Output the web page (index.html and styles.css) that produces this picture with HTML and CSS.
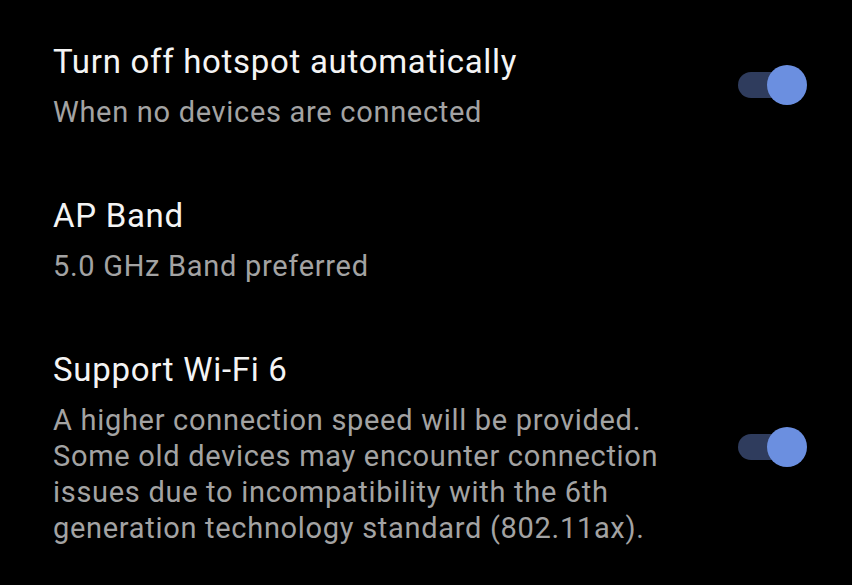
FILE: index.html
```html
<!DOCTYPE html>
<html lang="en">
<head>
    <meta charset="UTF-8">
    <meta name="viewport" content="width=device-width, initial-scale=1.0">
    <title>Hotspot settings</title>
    <link rel="stylesheet" href="styles.css">
</head>
<body>
    <div class="settings">
        <div class="row">
            <div class="text">
                <div class="title">Turn off hotspot automatically</div>
                <div class="summary">When no devices are connected</div>
            </div>
            <div class="switch on">
                <span class="track"></span>
                <span class="thumb"></span>
            </div>
        </div>

        <div class="row">
            <div class="text">
                <div class="title">AP Band</div>
                <div class="summary">5.0 GHz Band preferred</div>
            </div>
        </div>

        <div class="row">
            <div class="text narrow">
                <div class="title">Support Wi-Fi 6</div>
                <div class="summary">A higher connection speed will be provided.<br>Some old devices may encounter connection issues due to incompatibility with the 6th generation technology standard (802.11ax).</div>
            </div>
            <div class="switch on">
                <span class="track"></span>
                <span class="thumb"></span>
            </div>
        </div>
    </div>
</body>
</html>
```

FILE: styles.css
```css
body {
    margin: 0;
    background-color: #000;
    font-family: Roboto, "Liberation Sans", sans-serif;
}
.settings {
    padding-top: 8px;
}
.row {
    display: flex;
    align-items: center;
    justify-content: space-between;
    padding: 32px 45px 32px 53px;
}
.text.narrow {
    max-width: 615px;
}
.title {
    color: #f4f4f4;
    font-size: 33px;
    line-height: 44px;
    letter-spacing: 0.7px;
    margin-bottom: 10px;
}
.summary {
    color: #a3a3a3;
    font-size: 29px;
    line-height: 36px;
    letter-spacing: 0.7px;
}
.switch {
    position: relative;
    flex: none;
    width: 69px;
    height: 40px;
}
.switch .track {
    position: absolute;
    left: 0;
    top: 7px;
    width: 56px;
    height: 26px;
    border-radius: 13px;
    background-color: #2f3c5d;
}
.switch .thumb {
    position: absolute;
    right: 0;
    top: 0;
    width: 40px;
    height: 40px;
    border-radius: 50%;
    background-color: #6b8fe0;
}
```
